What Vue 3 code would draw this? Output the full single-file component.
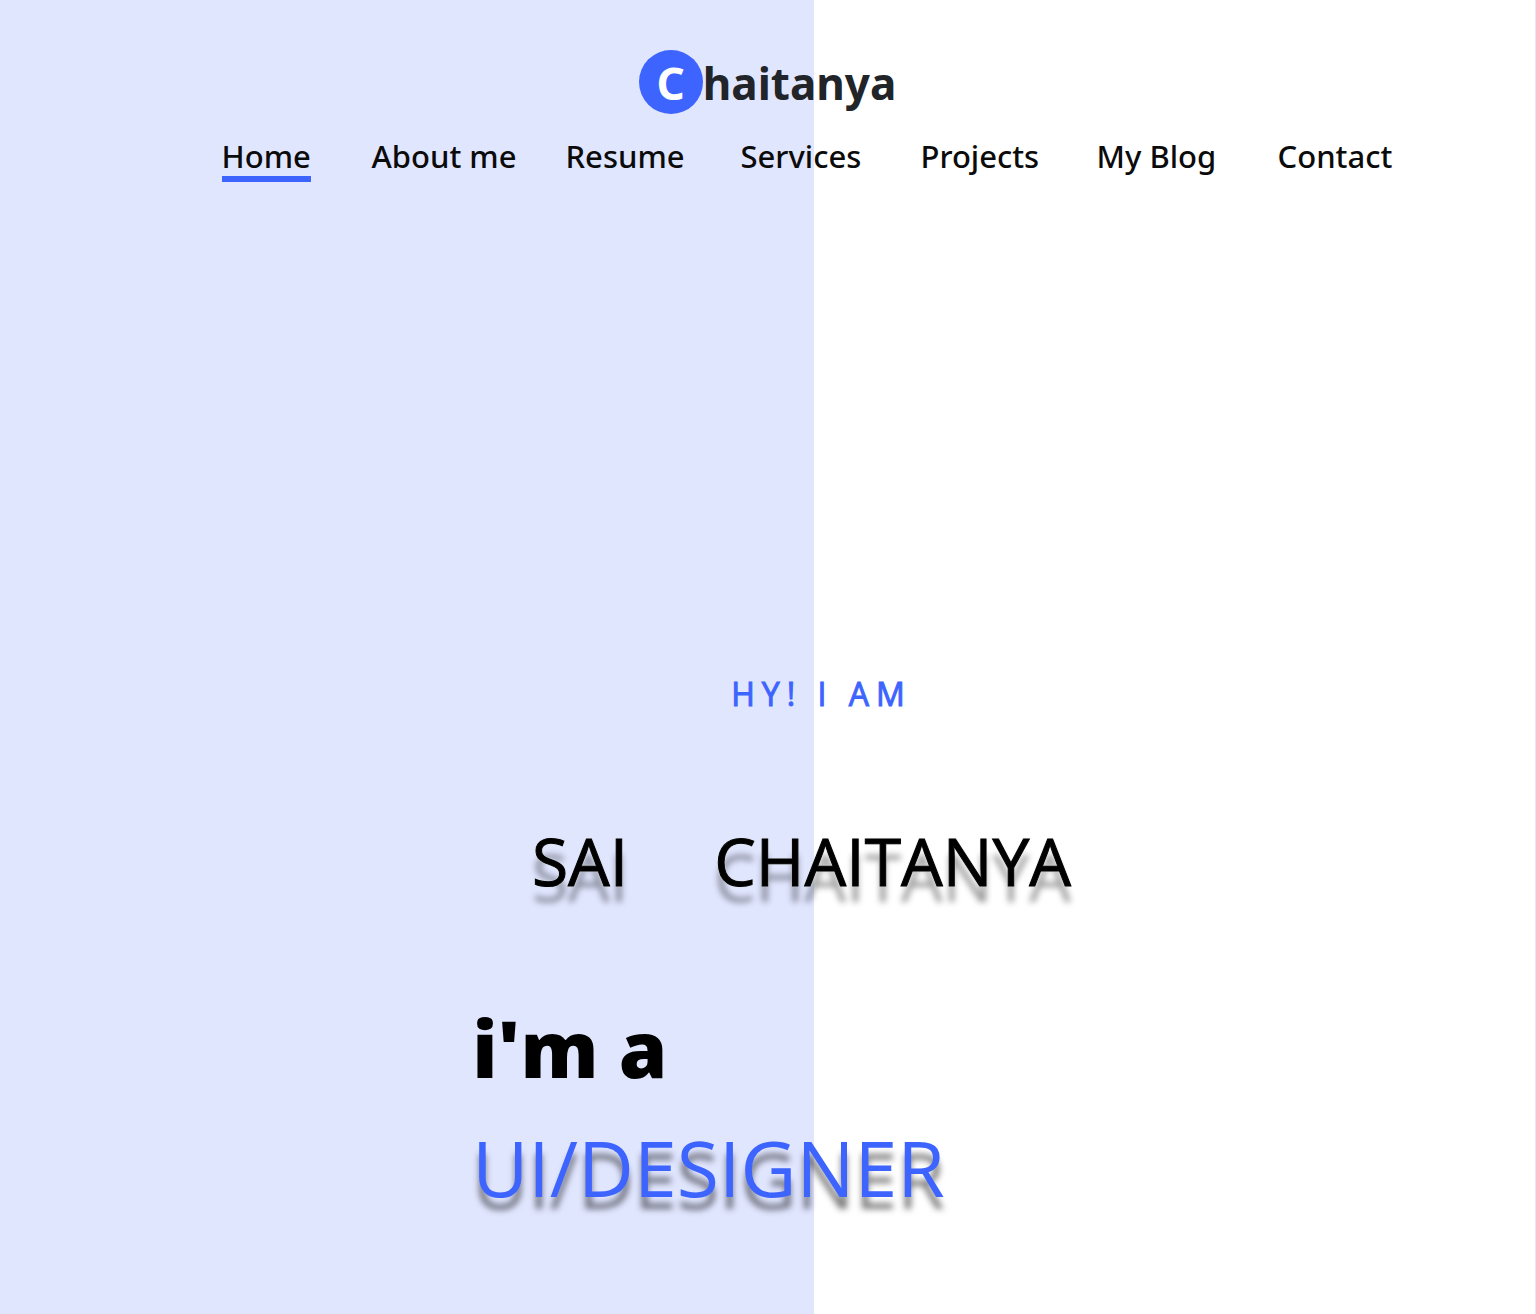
<script setup>
import { ref } from 'vue'

const active = ref('Home')
const links = ['Home', 'About me', 'Resume', 'Services', 'Projects', 'My Blog', 'Contact']
</script>

<template>
  <div class="page">
    <header class="header">
      <a class="brand" href="#"><span class="badge">C</span><span>haitanya</span></a>
      <nav class="nav" aria-label="Main">
        <a
          v-for="link in links"
          :key="link"
          href="#"
          :class="{ active: active === link }"
          @click.prevent="active = link"
        >{{ link }}</a>
      </nav>
    </header>
    <main class="hero">
      <p class="greeting">HY! I AM</p>
      <h1 class="name"><span>SAI</span><span>CHAITANYA</span></h1>
      <div class="role">
        <p class="intro">i'm a</p>
        <p class="job">UI/DESIGNER</p>
      </div>
    </main>
  </div>
</template>

<style>
body {
  margin: 0;
}
</style>

<style scoped>
.page {
  box-sizing: border-box;
  min-height: 100vh;
  padding-top: 50px;
  border-right: 1px solid #e2e6ff;
  background: linear-gradient(90deg, #e1e6ff 53%, #ffffff 53%);
  font-family: "Open Sans", "Noto Sans", sans-serif;
  color: #000000;
}

.header {
  display: flex;
  flex-direction: column;
  align-items: center;
  font-family: "Noto Sans", "Open Sans", sans-serif;
}

.brand {
  display: flex;
  align-items: flex-start;
  color: #212529;
  font-size: 44px;
  font-weight: 700;
  line-height: 66px;
  text-decoration: none;
}

.badge {
  width: 64px;
  height: 64px;
  border-radius: 50%;
  background: #3d64ff;
  color: #ffffff;
  text-align: center;
}

.nav {
  display: grid;
  grid-template-columns: 150px 194px 175px 180px 176px 181px 112px;
  justify-items: start;
  margin: 22px 0 0 76px;
}

.nav a {
  padding-bottom: 2px;
  border-bottom: 6px solid transparent;
  color: #0b0b0b;
  font-size: 31px;
  font-weight: 500;
  line-height: 36px;
  text-decoration: none;
  white-space: nowrap;
}

.nav .active {
  border-color: #3d64ff;
}

.hero {
  display: flex;
  flex-direction: column;
  align-items: center;
  padding: 492px 0 80px 68px;
}

.greeting {
  margin: 0 0 0 40px;
  color: #3d64ff;
  font-size: 32px;
  font-weight: 500;
  letter-spacing: 7px;
  line-height: 40px;
  -webkit-text-stroke: 1px #3d64ff;
}

.name {
  display: flex;
  gap: 86px;
  margin: 102px 0 0;
  font-size: 66px;
  font-weight: 400;
  line-height: 88px;
  -webkit-text-stroke: 1px #000000;
  text-shadow: 0 0 2px #d4dcd6, 0 0 2px #d4dcd6, 0 16px 6px rgba(0, 0, 0, 0.4);
}

.role {
  margin: 84px 186px 0 0;
}

.intro,
.job {
  margin: 0;
  font-size: 78px;
  line-height: 120px;
}

.intro {
  font-weight: 800;
}

.job {
  color: #3d64ff;
  font-size: 77px;
  text-shadow: 0 12px 6px rgba(0, 0, 0, 0.5);
}
</style>
